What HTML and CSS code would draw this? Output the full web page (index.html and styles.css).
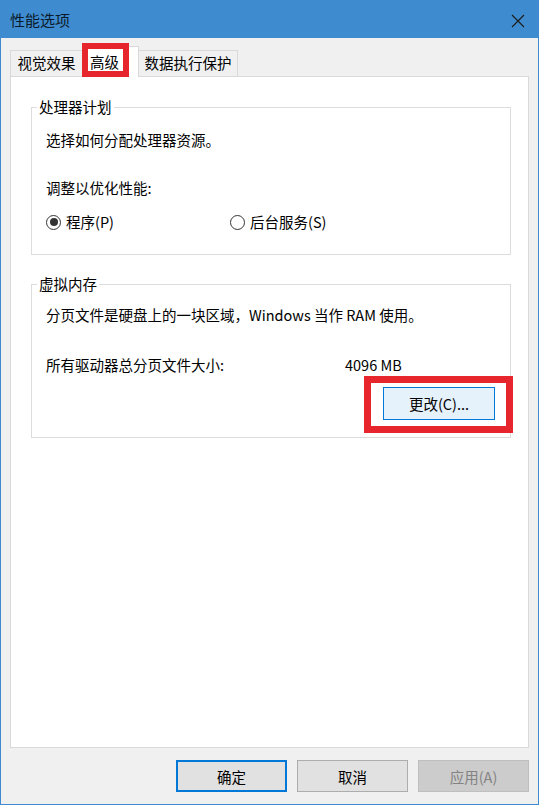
FILE: index.html
```html
<!DOCTYPE html>
<html lang="zh-CN">
<head>
    <meta charset="UTF-8">
    <title>性能选项</title>
    <link rel="stylesheet" href="styles.css">
</head>
<body>
    <div class="window">
        <div class="titlebar">
            <span class="title">性能选项</span>
            <svg class="close" width="14" height="14" viewBox="0 0 14 14">
                <path d="M1 1 L13 13 M13 1 L1 13" stroke="#1b1b1b" stroke-width="1.1" fill="none"/>
            </svg>
        </div>

        <div class="content">
            <div class="tabs">
                <div class="tab tab-visual">视觉效果</div>
                <div class="tab tab-active">高级</div>
                <div class="tab tab-dep">数据执行保护</div>
            </div>

            <div class="panel">
                <fieldset class="group group-cpu">
                    <legend>处理器计划</legend>
                    <div class="line line-first">选择如何分配处理器资源。</div>
                    <div class="line line-gap">调整以优化性能:</div>
                    <div class="options">
                        <label class="radio radio-first"><span class="dot checked"></span>程序(P)</label>
                        <label class="radio"><span class="dot"></span>后台服务(S)</label>
                    </div>
                </fieldset>

                <fieldset class="group group-mem">
                    <legend>虚拟内存</legend>
                    <div class="line line-mem">分页文件是硬盘上的一块区域，Windows 当作 RAM 使用。</div>
                    <div class="line line-size">
                        <span class="size-label">所有驱动器总分页文件大小:</span>
                        <span>4096 MB</span>
                    </div>
                    <div class="change-row">
                        <button class="btn-change">更改(C)...</button>
                    </div>
                </fieldset>
            </div>

            <div class="footer">
                <button class="btn btn-primary">确定</button>
                <button class="btn">取消</button>
                <button class="btn btn-disabled">应用(A)</button>
            </div>
        </div>
    </div>
</body>
</html>
```

FILE: styles.css
```css
body {
    margin: 0;
    padding: 0;
    font-family: "Noto Sans CJK SC", "Noto Sans", sans-serif;
    font-size: 14.5px;
    color: #000;
    background: #f0f0f0;
}

.window {
    width: 539px;
    height: 805px;
    box-sizing: border-box;
    border: 1px solid #3e8ccf;
    display: flex;
    flex-direction: column;
    background: #f0f0f0;
}

.titlebar {
    height: 37px;
    background: #3e8ccf;
    display: flex;
    align-items: center;
    justify-content: space-between;
    padding: 0 13px 0 9px;
}

.title {
    font-size: 15px;
    color: #0b1a2a;
}

.close {
    margin-top: 2px;
}

.content {
    flex: 1;
    display: flex;
    flex-direction: column;
    padding: 8px 9px 12px 9px;
}

/* tab strip */
.tabs {
    display: flex;
    align-items: flex-end;
    height: 30px;
}

.tab {
    height: 26px;
    box-sizing: border-box;
    border: 1px solid #d9d9d9;
    border-bottom: none;
    line-height: 24px;
    text-align: center;
    background: #f0f0f0;
}

.tab-visual {
    width: 72px;
    border-right: none;
}

.tab-active {
    width: 57px;
    height: 31px;
    margin-bottom: -1px;
    background: #fff;
    line-height: 30px;
    text-align: left;
    padding-left: 7px;
    position: relative;
    z-index: 2;
}

/* red highlight drawn over the selected tab */
.tab-active::after {
    content: "";
    position: absolute;
    left: -1px;
    top: -4px;
    width: 47px;
    height: 34px;
    box-sizing: border-box;
    border: 6px solid #e6262c;
}

.tab-dep {
    width: 99px;
    border-left: none;
}

.panel {
    flex: 1;
    background: #fff;
    border: 1px solid #d9d9d9;
    padding: 20px 17px 0 20px;
}

/* group boxes */
.group {
    margin: 0;
    padding: 0 15px 22px 14px;
    border: 1px solid #dcdcdc;
    min-width: 0;
}

.group legend {
    padding: 0 2px;
    margin-left: -9px;
    line-height: 20px;
}

.group-mem {
    margin-top: 19px;
    padding-bottom: 17px;
}

.line {
    line-height: 20px;
}

.line-first {
    margin-top: 13px;
}

.line-gap {
    margin-top: 28px;
}

.line-mem {
    margin-top: 11px;
}

.line-size {
    margin-top: 30px;
    display: flex;
}

.size-label {
    width: 299px;
}

.options {
    display: flex;
    margin-top: 14px;
    line-height: 20px;
}

.radio {
    display: flex;
    align-items: center;
    gap: 5px;
}

.radio-first {
    width: 184px;
}

.dot {
    flex-shrink: 0;
    width: 15px;
    height: 15px;
    box-sizing: border-box;
    border: 1px solid #333;
    border-radius: 50%;
    display: flex;
    align-items: center;
    justify-content: center;
}

.dot.checked::after {
    content: "";
    width: 8px;
    height: 8px;
    border-radius: 50%;
    background: #333;
}

.change-row {
    display: flex;
    justify-content: flex-end;
    margin-top: 12px;
}

.btn-change {
    width: 112px;
    height: 33px;
    background: #e5f1fb;
    border: 1px solid #0078d7;
    font-family: inherit;
    font-size: 14.5px;
    color: #000;
    position: relative;
}

.btn-change::after {
    content: "";
    position: absolute;
    left: -20px;
    top: -12px;
    right: -19px;
    bottom: -14px;
    border: 7px solid #e6262c;
}

/* dialog buttons */
.footer {
    display: flex;
    justify-content: flex-end;
    gap: 10px;
    margin-top: 12px;
}

.btn {
    width: 111px;
    height: 32px;
    background: #e1e1e1;
    border: 1px solid #adadad;
    font-family: inherit;
    font-size: 14.5px;
    color: #000;
}

.btn-primary {
    border: 2px solid #0078d7;
}

.btn-disabled {
    background: #cccccc;
    border-color: #bfbfbf;
    color: #838383;
}
```
